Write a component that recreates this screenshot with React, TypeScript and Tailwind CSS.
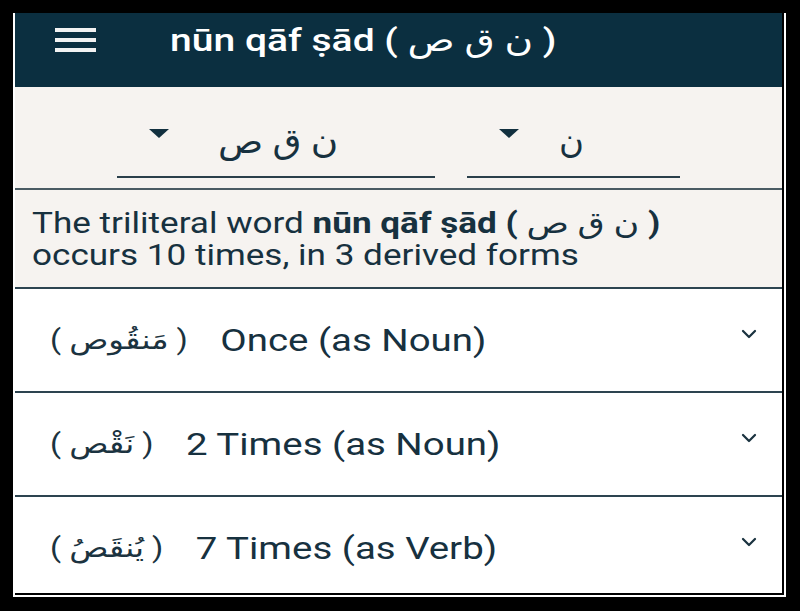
import { ChevronDown } from "lucide-react";

const forms = [
  { arabic: "مَنقُوص", label: "Once (as Noun)" },
  { arabic: "نَقْص", label: "2 Times (as Noun)" },
  { arabic: "يُنقَصُ", label: "7 Times (as Verb)" },
];

function Caret() {
  return (
    <svg width="20" height="9" viewBox="0 0 20 9" className="shrink-0">
      <path d="M0 0 L20 0 L10 9 Z" fill="#12303f" />
    </svg>
  );
}

export default function App() {
  return (
    <div className="w-[800px] h-[611px] bg-black pt-[13px] pl-[13px] font-['Roboto',_'DejaVu_Sans',_sans-serif] text-[#17313f]">
      <div className="w-[773px] h-[584px] border-x-2 border-b-2 border-white bg-black pr-[2px] pb-[2px]">
        <div className="h-full bg-white flex flex-col overflow-hidden">
          <header className="h-[74px] bg-[#0b2f40] flex items-center shrink-0">
            <div className="ml-[40px] w-[41px] flex flex-col gap-[6px] -mt-[20px]">
              <span className="h-[4px] bg-[#f2f2f2]" />
              <span className="h-[4px] bg-[#f2f2f2]" />
              <span className="h-[4px] bg-[#f2f2f2]" />
            </div>
            <h1 className="ml-[74px] -mt-[20px] text-white text-[32px] font-medium whitespace-nowrap origin-left scale-x-[1.22]">
              nūn qāf ṣād ( ن ق ص )
            </h1>
          </header>

          <div className="h-[101px] bg-[#f6f3f0] flex items-start pt-[34px] shrink-0">
            <div className="ml-[102px] w-[318px] h-[57px] border-b-2 border-[#2a3f4a] flex items-start">
              <div className="ml-[32px] mt-[8px]">
                <Caret />
              </div>
              <span className="ml-[49px] -mt-[4px] text-[34px] leading-[48px] inline-block origin-left scale-x-[1.1]">
                ن ق ص
              </span>
            </div>
            <div className="ml-[32px] w-[213px] h-[57px] border-b-2 border-[#2a3f4a] flex items-start">
              <div className="ml-[32px] mt-[8px]">
                <Caret />
              </div>
              <span className="ml-[40px] -mt-[4px] text-[34px] leading-[48px]">ن</span>
            </div>
          </div>

          <div className="h-[2px] bg-[#4a5b63] shrink-0" />
          <div className="h-[97px] bg-[#f6f3f0] pl-[17px] pt-[17px] shrink-0">
            <p className="text-[29px] leading-[32px] whitespace-nowrap origin-left scale-x-[1.21]">
              The triliteral word <b className="font-bold">nūn qāf ṣād (</b>{" "}
              <span className="font-normal">ن ق ص</span> <b className="font-bold">)</b>
              <br />
              occurs 10 times, in 3 derived forms
            </p>
          </div>

          {forms.map((f) => (
            <div
              key={f.label}
              className="h-[104px] border-t-2 border-[#2d4450] flex items-center shrink-0"
            >
              <div className="ml-[35px] flex items-center whitespace-nowrap origin-left scale-x-[1.2]">
                <span className="text-[27px] text-[#1b3340]">( {f.arabic} )</span>
                <span className="ml-[27px] text-[32px]">{f.label}</span>
              </div>
              <ChevronDown className="ml-auto mr-[21px] -mt-[12px]" size={24} strokeWidth={2.25} color="#1b3340" />
            </div>
          ))}
        </div>
      </div>
    </div>
  );
}
